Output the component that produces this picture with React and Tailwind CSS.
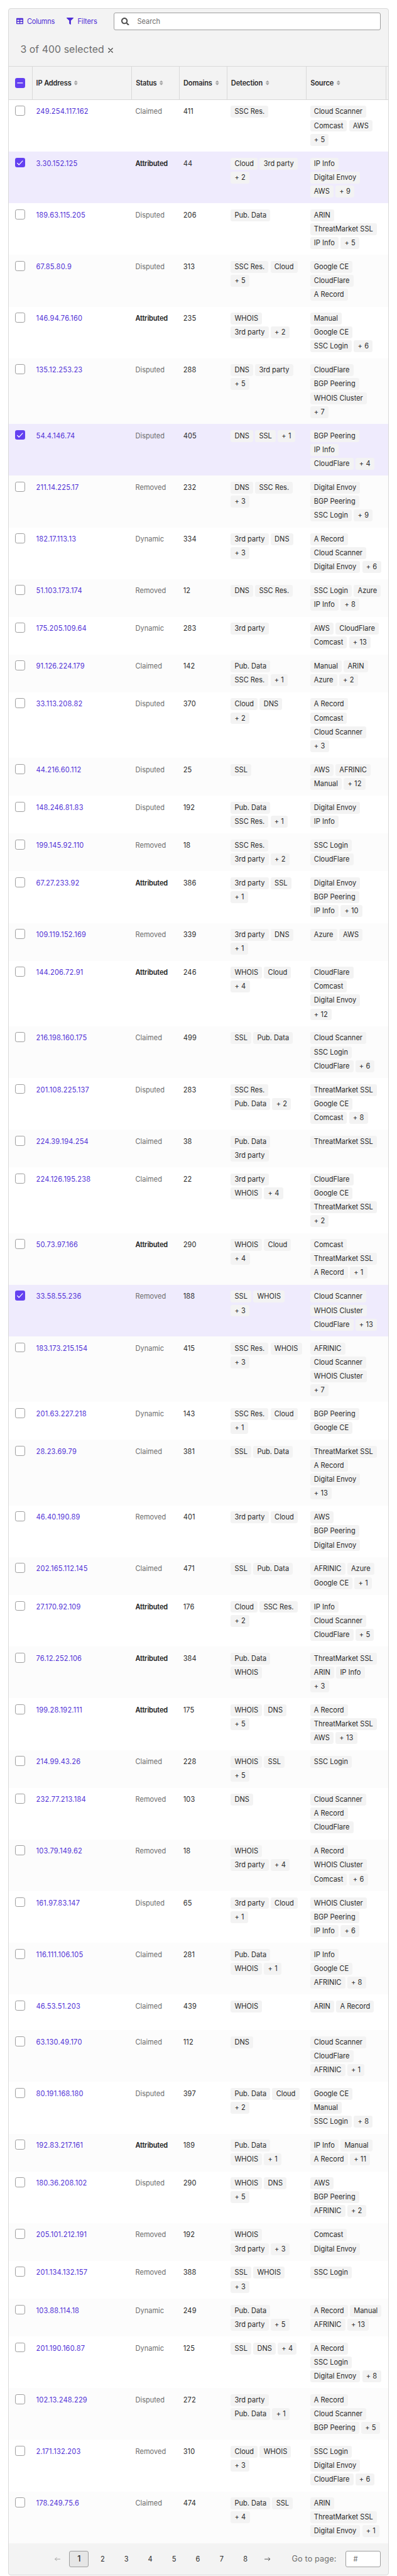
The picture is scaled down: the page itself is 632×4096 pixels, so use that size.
import React from "react";
import { FaFilter, FaSearch, FaSort, FaTable } from "react-icons/fa";

const HEAD = [
  ["IP Address", "w-[158.6px]"],
  ["Status", "w-[75.84px]"],
  ["Domains", "w-[75.84px]"],
  ["Detection", "w-[126.4px]"],
  ["Source", "w-[126.4px]"],
];

// Fields are split by "|", tags by ",", and "/" starts a new line of tags. "*" marks a selected row.
const ROWS = `249.254.117.162|Claimed|411|SSC Res.|Cloud Scanner,Comcast,AWS/+ 5
*3.30.152.125|Attributed|44|Cloud,3rd party/+ 2|IP Info/Digital Envoy/AWS,+ 9
189.63.115.205|Disputed|206|Pub. Data|ARIN,ThreatMarket SSL,IP Info,+ 5
67.85.80.9|Disputed|313|SSC Res.,Cloud,+ 5|Google CE,CloudFlare,A Record
146.94.76.160|Attributed|235|WHOIS/3rd party,+ 2|Manual/Google CE/SSC Login,+ 6
135.12.253.23|Disputed|288|DNS,3rd party,+ 5|CloudFlare,BGP Peering,WHOIS Cluster/+ 7
*54.4.146.74|Disputed|405|DNS,SSL,+ 1|BGP Peering/IP Info/CloudFlare,+ 4
211.14.225.17|Removed|232|DNS,SSC Res.,+ 3|Digital Envoy,BGP Peering,SSC Login,+ 9
182.17.113.13|Dynamic|334|3rd party,DNS,+ 3|A Record,Cloud Scanner,Digital Envoy,+ 6
51.103.173.174|Removed|12|DNS,SSC Res.|SSC Login,Azure,IP Info,+ 8
175.205.109.64|Dynamic|283|3rd party|AWS,CloudFlare,Comcast,+ 13
91.126.224.179|Claimed|142|Pub. Data,SSC Res.,+ 1|Manual,ARIN/Azure,+ 2
33.113.208.82|Disputed|370|Cloud,DNS/+ 2|A Record/Comcast/Cloud Scanner/+ 3
44.216.60.112|Disputed|25|SSL|AWS,AFRINIC,Manual,+ 12
148.246.81.83|Disputed|192|Pub. Data,SSC Res.,+ 1|Digital Envoy/IP Info
199.145.92.110|Removed|18|SSC Res./3rd party,+ 2|SSC Login/CloudFlare
67.27.233.92|Attributed|386|3rd party,SSL,+ 1|Digital Envoy,BGP Peering,IP Info,+ 10
109.119.152.169|Removed|339|3rd party,DNS,+ 1|Azure,AWS
144.206.72.91|Attributed|246|WHOIS,Cloud,+ 4|CloudFlare/Comcast/Digital Envoy/+ 12
216.198.160.175|Claimed|499|SSL,Pub. Data|Cloud Scanner,SSC Login,CloudFlare,+ 6
201.108.225.137|Disputed|283|SSC Res.,Pub. Data,+ 2|ThreatMarket SSL,Google CE,Comcast,+ 8
224.39.194.254|Claimed|38|Pub. Data/3rd party|ThreatMarket SSL
224.126.195.238|Claimed|22|3rd party/WHOIS,+ 4|CloudFlare,Google CE,ThreatMarket SSL,+ 2
50.73.97.166|Attributed|290|WHOIS,Cloud,+ 4|Comcast,ThreatMarket SSL,A Record,+ 1
*33.58.55.236|Removed|188|SSL,WHOIS/+ 3|Cloud Scanner,WHOIS Cluster,CloudFlare,+ 13
183.173.215.154|Dynamic|415|SSC Res.,WHOIS,+ 3|AFRINIC,Cloud Scanner,WHOIS Cluster/+ 7
201.63.227.218|Dynamic|143|SSC Res.,Cloud,+ 1|BGP Peering,Google CE
28.23.69.79|Claimed|381|SSL,Pub. Data|ThreatMarket SSL,A Record/Digital Envoy/+ 13
46.40.190.89|Removed|401|3rd party,Cloud|AWS/BGP Peering/Digital Envoy
202.165.112.145|Claimed|471|SSL,Pub. Data|AFRINIC,Azure,Google CE,+ 1
27.170.92.109|Attributed|176|Cloud,SSC Res.,+ 2|IP Info/Cloud Scanner/CloudFlare,+ 5
76.12.252.106|Attributed|384|Pub. Data/WHOIS|ThreatMarket SSL,ARIN,IP Info/+ 3
199.28.192.111|Attributed|175|WHOIS,DNS/+ 5|A Record,ThreatMarket SSL,AWS,+ 13
214.99.43.26|Claimed|228|WHOIS,SSL/+ 5|SSC Login
232.77.213.184|Removed|103|DNS|Cloud Scanner,A Record/CloudFlare
103.79.149.62|Removed|18|WHOIS/3rd party,+ 4|A Record,WHOIS Cluster,Comcast,+ 6
161.97.83.147|Disputed|65|3rd party,Cloud,+ 1|WHOIS Cluster,BGP Peering/IP Info,+ 6
116.111.106.105|Claimed|281|Pub. Data/WHOIS,+ 1|IP Info/Google CE/AFRINIC,+ 8
46.53.51.203|Claimed|439|WHOIS|ARIN,A Record
63.130.49.170|Claimed|112|DNS|Cloud Scanner,CloudFlare/AFRINIC,+ 1
80.191.168.180|Disputed|397|Pub. Data,Cloud,+ 2|Google CE/Manual/SSC Login,+ 8
192.83.217.161|Attributed|189|Pub. Data/WHOIS,+ 1|IP Info,Manual/A Record,+ 11
180.36.208.102|Disputed|290|WHOIS,DNS/+ 5|AWS/BGP Peering/AFRINIC,+ 2
205.101.212.191|Removed|192|WHOIS/3rd party,+ 3|Comcast/Digital Envoy
201.134.132.157|Removed|388|SSL,WHOIS/+ 3|SSC Login
103.88.114.18|Dynamic|249|Pub. Data/3rd party,+ 5|A Record,Manual/AFRINIC,+ 13
201.190.160.87|Dynamic|125|SSL,DNS,+ 4|A Record/SSC Login/Digital Envoy,+ 8
102.13.248.229|Disputed|272|3rd party/Pub. Data,+ 1|A Record,Cloud Scanner,BGP Peering,+ 5
2.171.132.203|Removed|310|Cloud,WHOIS/+ 3|SSC Login/Digital Envoy/CloudFlare,+ 6
178.249.75.6|Claimed|474|Pub. Data,SSL,+ 4|ARIN,ThreatMarket SSL,Digital Envoy,+ 1`
  .split("\n")
  .map((line) => {
    const [ip, status, domains, detection, source] = line.split("|");
    return {
      selected: ip.startsWith("*"),
      ip: ip.replace("*", ""),
      status,
      domains,
      detection: detection.split("/").map((l) => l.split(",")),
      source: source.split("/").map((l) => l.split(",")),
    };
  });

function Checkbox({ state }) {
  if (!state) {
    return <span className="block size-[15.8px] rounded-[3.2px] border border-[#9e9e9e] bg-white" />;
  }
  return (
    <span className="flex size-[15.8px] items-center justify-center rounded-[3.2px] bg-[#6340f0]">
      <svg viewBox="0 0 20 20" className="size-full" fill="none" stroke="white" strokeWidth="1.6" strokeLinecap="round" strokeLinejoin="round">
        {state === "some" ? <path d="M5 10h10" strokeWidth="1.8" /> : <path d="M4.6 10.6l3.2 3.4 7.3-7.8" />}
      </svg>
    </span>
  );
}

function Tags({ lines }) {
  return (
    <div className="flex w-[126.4px] shrink-0 flex-col gap-[3.16px] pr-[5.9px] pl-[5.5px]">
      {lines.map((items, i) => (
        <div key={i} className="flex flex-wrap gap-[3.16px]">
          {items.map((t) => (
            <span
              key={t}
              className={`flex h-[18.97px] items-center rounded-[3.16px] bg-[#f3f3f3] px-[6.2px] whitespace-nowrap text-[#2a2a2a] ${t.startsWith("+") ? "tracking-[0.1px]" : ""}`}
            >
              {t}
            </span>
          ))}
        </div>
      ))}
    </div>
  );
}

function Row({ row, index }) {
  const bg = row.selected ? "bg-[#efebfd]" : index % 2 ? "bg-[#fcfcfc]" : "bg-white";
  const status = row.status === "Attributed" ? "font-semibold tracking-[-0.2px] text-[#1f1f1f]" : "text-[#6e6e6e]";
  return (
    <div className={`flex min-h-[56.9px] items-start py-[9.485px] leading-[18.97px] ${bg}`}>
      <div className="w-[37.9px] shrink-0 pl-[10.85px]">
        <Checkbox state={row.selected ? "all" : null} />
      </div>
      <div className="w-[158.6px] shrink-0 pl-[6px] tracking-[0.21px] text-[#4f2fd6]">{row.ip}</div>
      <div className={`w-[75.84px] shrink-0 pl-[5.4px] ${status}`}>{row.status}</div>
      <div className="w-[75.84px] shrink-0 pl-[5.7px] tracking-[0.15px] text-[#2a2a2a]">{row.domains}</div>
      <Tags lines={row.detection} />
      <Tags lines={row.source} />
    </div>
  );
}

function Arrow({ className, flip }) {
  return (
    <svg viewBox="0 0 12 8" className={className} fill="none" stroke="currentColor" strokeWidth="1.2" strokeLinecap="round" strokeLinejoin="round">
      {flip ? <path d="M11.4 4H.8M4 .8L.8 4 4 7.2" /> : <path d="M.6 4h10.6M8 .8L11.2 4 8 7.2" />}
    </svg>
  );
}

function Footer() {
  return (
    <div className="flex h-[50.4px] items-center pl-[73px] text-[#2a2a2a]">
      <Arrow flip className="h-[6.3px] w-[9.5px] text-[#9e9e9e]" />
      <span className="ml-[13.5px] flex h-[25.3px] w-[31.6px] items-center justify-center rounded-[3px] border border-[#9e9e9e] bg-[#e6e6e6] pl-[1px] text-[12.64px] font-medium">
        1
      </span>
      {[2, 3, 4, 5, 6, 7, 8].map((n) => (
        <span key={n} className="ml-[6.32px] flex w-[31.6px] justify-center pt-[1px]">
          {n}
        </span>
      ))}
      <Arrow className="ml-[14.2px] h-[6.3px] w-[9.5px] text-[#4d4d4d]" />
      <span className="ml-[34.3px] w-[71.8px] text-[12.64px] tracking-[0.14px] whitespace-nowrap text-[#6e6e6e]">Go to page:</span>
      <span className="mr-[12.3px] ml-auto flex h-[25.3px] w-[56.5px] items-center rounded-[3px] border border-[#9e9e9e] bg-white pt-[1px] pl-[11.8px] text-[#6e6e6e]">
        #
      </span>
    </div>
  );
}

export default function App() {
  return (
    <div className="h-[4096px] overflow-hidden bg-white pt-[12.64px] font-['Inter',sans-serif] text-[11.06px]">
      <div className="mx-[12.64px] rounded-[4px] border border-[#d9d9d9] bg-[#f3f3f3]">
        <div className="flex h-[40.7px] items-center pl-[12.4px] text-[#4f2fd6]">
          <FaTable className="size-[11.06px]" />
          <span className="ml-[5.9px] w-[45px] tracking-[-0.25px]">Columns</span>
          <FaFilter className="ml-[18.5px] size-[11.06px]" />
          <span className="ml-[5.9px] tracking-[-0.1px]">Filters</span>
          <div className="mr-[12.3px] ml-auto flex h-[28.4px] w-[425.5px] items-center rounded-[3px] border border-[#9e9e9e] bg-white pl-[11.4px] text-[#6e6e6e]">
            <FaSearch className="size-[12.64px] text-[#4d4d4d]" />
            <span className="ml-[12.9px] pt-[1.5px]">Search</span>
          </div>
        </div>
        <div className="flex h-[50.8px] items-start pl-[18.8px] text-[15.8px] text-[#6e6e6e]">
          <span className="pt-[13px] leading-[24px] tracking-[0.08px]">3 of 400 selected</span>
          <svg viewBox="0 0 10 10" className="mt-[21.8px] ml-[6.3px] size-[8px]" stroke="#4d4d4d" strokeWidth="1.7" strokeLinecap="round">
            <path d="M1 1l8 8M9 1l-8 8" />
          </svg>
        </div>
        <div className="flex h-[53.8px] border-y border-[#d9d9d9] font-semibold text-[#2a2a2a]">
          <div className="flex w-[37.9px] shrink-0 items-center border-r border-[#d9d9d9] pl-[10.85px]">
            <Checkbox state="some" />
          </div>
          {HEAD.map(([label, w]) => (
            <div key={label} className={`flex shrink-0 items-center border-r border-[#d9d9d9] pl-[6.1px] tracking-[-0.15px] ${w}`}>
              {label}
              <FaSort className="-mt-[1px] ml-[2.8px] size-[9.5px] text-[#a3a3a3]" />
            </div>
          ))}
        </div>
        {ROWS.map((row, i) => (
          <Row key={row.ip} row={row} index={i} />
        ))}
        <Footer />
      </div>
    </div>
  );
}
